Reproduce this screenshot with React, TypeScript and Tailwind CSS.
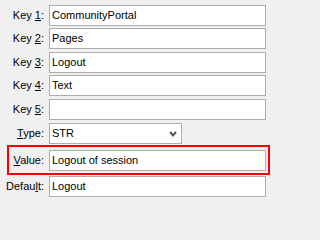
import React from 'react'

const Acc = ({ children }: { children: React.ReactNode }) => <span className='underline underline-offset-[1px]'>{children}</span>

const Field = ({ value }: { value: string }) => (
  <div className='w-[217px] h-[21px] border border-[#adadad] bg-white pl-[2px] flex items-center leading-none'>
    {value}
  </div>
)

const Row = ({ label, value, className = '' }: { label: React.ReactNode; value: string; className?: string }) => (
  <div className={`flex items-center ${className}`}>
    <div className='w-[45px] text-right pr-[1px]'>{label}</div>
    <div className='ml-[4px]'>
      <Field value={value} />
    </div>
  </div>
)

export default function App() {
  return (
    <div className='w-full min-h-screen bg-[#f0f0f0]'>
      <div
        className='w-[271px] h-[202px] bg-[#f0f0f0] text-black text-[11px] pt-[5px] overflow-hidden'
        style={{ fontFamily: '"Liberation Sans", Arial, sans-serif' }}
      >
        <Row label={<>Key <Acc>1</Acc>:</>} value='CommunityPortal' />
        <Row label={<>Key <Acc>2</Acc>:</>} value='Pages' className='mt-[2px]' />
        <Row label={<>Key <Acc>3</Acc>:</>} value='Logout' className='mt-[3px]' />
        <Row label={<>Key <Acc>4</Acc>:</>} value='Text' className='mt-[2px]' />
        <Row label={<>Key <Acc>5</Acc>:</>} value='' className='mt-[3px]' />

        {/* type select */}
        <div className='flex items-center mt-[3px]'>
          <div className='w-[45px] text-right pr-[1px]'><Acc>T</Acc>ype:</div>
          <div className='ml-[4px] w-[133px] h-[21px] border border-[#adadad] bg-white pl-[2px] flex items-center justify-between leading-none'>
            <span>STR</span>
            <svg width='8' height='6' viewBox='0 0 8 6' className='mr-[4px]'>
              <polyline points='1,1 4,4.5 7,1' fill='none' stroke='#555' strokeWidth='2' />
            </svg>
          </div>
        </div>

        {/* highlighted value row */}
        <div className='mt-[1px] ml-[7px] w-[263px] h-[30px] border-2 border-[#ff0000] pt-[3px]'>
          <div className='flex items-center'>
            <div className='w-[36px] text-right pr-[1px]'><Acc>V</Acc>alue:</div>
            <div className='ml-[4px]'>
              <Field value='Logout of session' />
            </div>
          </div>
        </div>

        <Row label={<>Defau<Acc>l</Acc>t:</>} value='Logout' className='mt-[1px]' />
      </div>
    </div>
  )
}
